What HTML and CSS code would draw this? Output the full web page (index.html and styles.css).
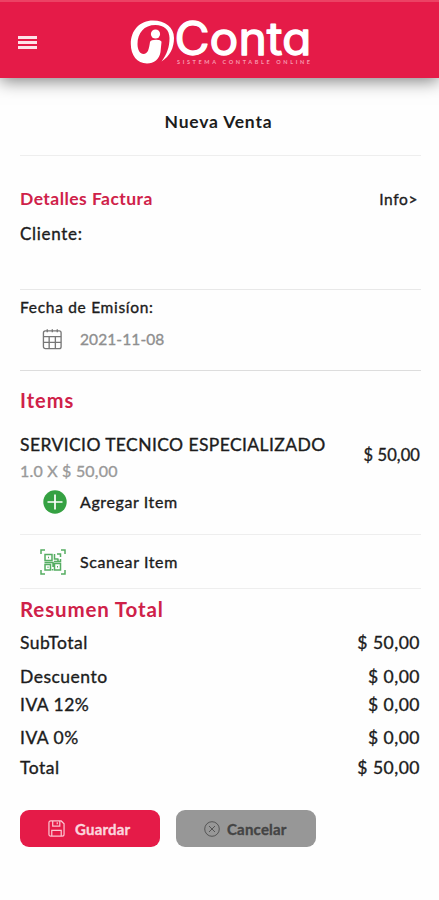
FILE: index.html
```
<!DOCTYPE html>
<html lang="es">
<head>
  <meta charset="UTF-8" />
  <meta name="viewport" content="width=device-width, initial-scale=1.0" />
  <title>iConta - Nueva Venta</title>
  <link rel="stylesheet" href="styles.css">
</head>
<body>
  <!-- Top bar -->
  <header class="top-bar">
    <button class="menu-btn" aria-label="Menu">
      <span></span>
      <span></span>
      <span></span>
    </button>
    <svg class="logo" viewBox="0 -8 190 66" aria-label="iConta">
      <path fill="#fff" d="M23 3.500C35 3.500 44 10 44 21C44 31 40 39 31.500 44.500C37 37 39.500 30 39.500 21C39.500 13 34 8 25.500 8C14 8 7.500 16 7.500 27C7.500 33 10 37 13.500 37C18 37 19 32 20 25C20.500 22 31.500 22 31.500 25L30.500 35C29.500 42 24 46.500 17 46.500C7 46.500 .8 38 .8 27C.8 13 10 3.500 23 3.500Z" />
      <circle cx="25.500" cy="17" r="4.600" fill="#fff" />
      <text class="logo-name" x="44.500" y="38" textLength="137" lengthAdjust="spacingAndGlyphs">Conta</text>
      <text class="logo-tag" x="47" y="46.700" textLength="133">SISTEMA CONTABLE ONLINE</text>
    </svg>
  </header>

  <main class="content">
    <h1 class="page-title"><span>Nueva Venta</span></h1>

    <!-- Invoice details -->
    <section class="details">
      <div class="row details-head">
        <h2 class="section-title details-title">Detalles Factura</h2>
        <a class="info-link">Info&gt;</a>
      </div>
      <p class="client">Cliente:</p>
    </section>

    <section class="date">
      <p class="date-label">Fecha de Emisíon:</p>
      <div class="date-value">
        <svg class="icon-calendar" viewBox="0 0 22 22">
          <rect x="1.500" y="2.500" width="18.500" height="18.500" rx="2" />
          <path d="M1.500 8.500H20M1.500 14.500H20M7.500 8.500V21M14 8.500V21M5.500 .800V4M10.800 .800V4M16 .800V4" />
        </svg>
        <span>2021-11-08</span>
      </div>
    </section>

    <!-- Items -->
    <section class="items">
      <h2 class="section-title items-title">Items</h2>
      <div class="row item">
        <div>
          <p class="item-name">SERVICIO TECNICO ESPECIALIZADO</p>
          <p class="item-qty">1.0 X $ 50,00</p>
        </div>
        <span class="item-price">$ 50,00</span>
      </div>
      <div class="action add">
        <svg class="icon-add" viewBox="0 0 24 24">
          <circle cx="12" cy="12" r="11.700" fill="#35a142" />
          <path d="M12 4.500V19.500M4.500 12H19.500" stroke="#fff" stroke-width="1.700" />
        </svg>
        <span>Agregar Item</span>
      </div>
      <div class="action scan">
        <svg class="icon-scan" viewBox="0 0 26 26">
          <path d="M1 5V1H5M21 1H25V5M25 21V25H21M5 25H1V21" />
          <path d="M5 5.500H12V11.500H5ZM5 15.500H10.500V21H5ZM14.500 14.500H20.500V21H14.500ZM14.500 5V10H18M17 5H20.500V8M14 12.500H20.500V10M4.500 13.500H13V18M12.500 20V21.500M18 9.500V12" />
          <path d="M8 8.500H9M7.500 18.300H8.500M17 17.800H18" />
        </svg>
        <span>Scanear Item</span>
      </div>
    </section>

    <!-- Totals -->
    <section class="summary">
      <h2 class="section-title summary-title">Resumen Total</h2>
      <div class="row subtotal"><span>SubTotal</span><span class="amount">$ 50,00</span></div>
      <div class="row discount"><span>Descuento</span><span class="amount">$ 0,00</span></div>
      <div class="row iva"><span>IVA 12%</span><span class="amount">$ 0,00</span></div>
      <div class="row iva-zero"><span>IVA 0%</span><span class="amount">$ 0,00</span></div>
      <div class="row total"><span>Total</span><span class="amount">$ 50,00</span></div>
    </section>

    <div class="button-group">
      <button class="btn btn-save">
        <svg class="icon-save" viewBox="0 0 18 18">
          <path d="M1 3Q1 1 3 1H14L17 4V15Q17 17 15 17H3Q1 17 1 15Z" />
          <path d="M5 1V6.500H12.500V1M4 17V11H14V17M9.800 2.500V4.500" />
        </svg>
        <span>Guardar</span>
      </button>
      <button class="btn btn-cancel">
        <svg class="icon-cancel" viewBox="0 0 16 16">
          <circle cx="8" cy="8" r="7.300" />
          <path d="M5 5L11 11M11 5L5 11" />
        </svg>
        <span>Cancelar</span>
      </button>
    </div>
  </main>
</body>
</html>
```
FILE: styles.css
```
* {
  margin: 0;
  padding: 0;
  box-sizing: border-box;
}

body {
  font-family: 'Lato', sans-serif;
  background-color: #fefefe;
  color: #1c1c1c;
  min-height: 100vh;
  overflow: hidden;
  -webkit-text-stroke: 0.35px currentColor;
}

/* Top bar */
.top-bar {
  display: flex;
  align-items: center;
  height: 78px;
  padding: 0 18px;
  background-color: #e51b48;
  border-top: 2px solid #ec4264;
  box-shadow: 0 3px 16px rgba(0, 0, 0, 0.5);
}

.menu-btn {
  display: flex;
  flex-direction: column;
  gap: 2px;
  width: 19px;
  margin-top: 4px;
  background: none;
  border: none;
}
.menu-btn span {
  height: 3px;
  background-color: #fde3e9;
}

.logo {
  width: 190px;
  height: 66px;
  margin: 3px 0 0 93px;
  -webkit-text-stroke: 0;
}
.logo-name {
  font-family: 'Inter', sans-serif;
  font-size: 46px;
  font-weight: 400;
  font-feature-settings: 'cv11';
  fill: #fff;
  stroke: #fff;
  stroke-width: 1.3px;
  stroke-linejoin: round;
}
.logo-tag {
  font-size: 5.5px;
  font-weight: 700;
  fill: #f79bb0;
}

.content {
  padding: 0 18px 0 20px;
}

.row {
  display: flex;
  justify-content: space-between;
}

.section-title {
  color: #cf2149;
  font-weight: 700;
  -webkit-text-stroke: 0;
}

.page-title {
  height: 78px;
  padding-top: 32px;
  border-bottom: 1px solid #eee;
  text-align: center;
  font-size: 17.5px;
  line-height: 24px;
  letter-spacing: 0.8px;
  -webkit-text-stroke: 0;
}
.page-title span {
  margin-right: 4px;
}

/* Invoice details */
.details {
  height: 134px;
  padding-top: 31px;
  border-bottom: 1px solid #e8e8e8;
}
.details-head {
  line-height: 24px;
}
.details-title {
  font-size: 17.5px;
  letter-spacing: 0.45px;
}
.info-link {
  margin-right: 3px;
  font-size: 15.5px;
  letter-spacing: 0.6px;
}
.client {
  margin-top: 11px;
  font-size: 17px;
  line-height: 24px;
  letter-spacing: 0.7px;
}

.date {
  height: 81px;
  padding-top: 5px;
  border-bottom: 1px solid #ddd;
}
.date-label {
  font-size: 15.5px;
  line-height: 24px;
  letter-spacing: 0.7px;
}
.date-value {
  display: flex;
  align-items: center;
  gap: 17px;
  height: 24px;
  margin-top: 8px;
  padding-left: 22px;
  color: #8f8f8f;
  font-size: 15.5px;
  letter-spacing: 0.1px;
}
.icon-calendar {
  width: 21px;
  height: 22px;
  fill: none;
  stroke: #777;
  stroke-width: 1.4;
}

/* Items */
.items-title {
  padding-top: 17px;
  font-size: 20px;
  line-height: 24px;
  letter-spacing: 1px;
}
.item {
  height: 74px;
  padding-top: 21px;
  line-height: 24px;
}
.item-name {
  font-size: 17.5px;
  letter-spacing: 0.4px;
}
.item-qty {
  margin-top: 2px;
  color: #999;
  font-size: 16px;
  letter-spacing: 0.2px;
}
.item-price {
  margin: 10px 1px 0 0;
  font-size: 16.5px;
  letter-spacing: 0.1px;
}
.action {
  display: flex;
  align-items: center;
  font-size: 16px;
  letter-spacing: 0.6px;
  border-bottom: 1px solid #eee;
}
.add {
  height: 49px;
  padding: 0 0 17px 23px;
  gap: 13px;
}
.scan {
  height: 54px;
  padding-left: 20px;
  gap: 14px;
}
.icon-add {
  width: 24px;
  height: 24px;
}
.icon-scan {
  width: 26px;
  height: 26px;
  fill: none;
  stroke: #55ad62;
  stroke-width: 1.5;
}

/* Totals */
.summary {
  font-size: 17.5px;
  line-height: 24px;
  letter-spacing: 0.5px;
}
.summary-title {
  padding-top: 8px;
  font-size: 20.5px;
  letter-spacing: 0.85px;
}
.subtotal {
  margin-top: 10px;
}
.discount {
  margin-top: 10px;
}
.iva {
  margin-top: 4px;
}
.iva-zero {
  margin-top: 9px;
}
.total {
  margin-top: 6px;
}
.amount {
  margin-right: 1px;
}

/* Buttons */
.button-group {
  display: flex;
  gap: 16px;
  margin-top: 30px;
}
.btn {
  display: flex;
  align-items: center;
  width: 140px;
  height: 37px;
  border: none;
  border-radius: 9px;
  font-family: inherit;
  font-size: 15px;
  font-weight: 700;
  letter-spacing: 0.2px;
}
.btn-save {
  gap: 10px;
  padding-left: 28px;
  background-color: #e51b48;
  color: #fbd5dd;
}
.btn-cancel {
  gap: 7px;
  padding-left: 28px;
  background-color: #979797;
  color: #444;
}
.icon-save {
  width: 17px;
  height: 17px;
  fill: none;
  stroke: #fbc5d0;
  stroke-width: 1.3;
}
.icon-cancel {
  width: 16px;
  height: 16px;
  fill: none;
  stroke: #555;
  stroke-width: 1;
}
```
